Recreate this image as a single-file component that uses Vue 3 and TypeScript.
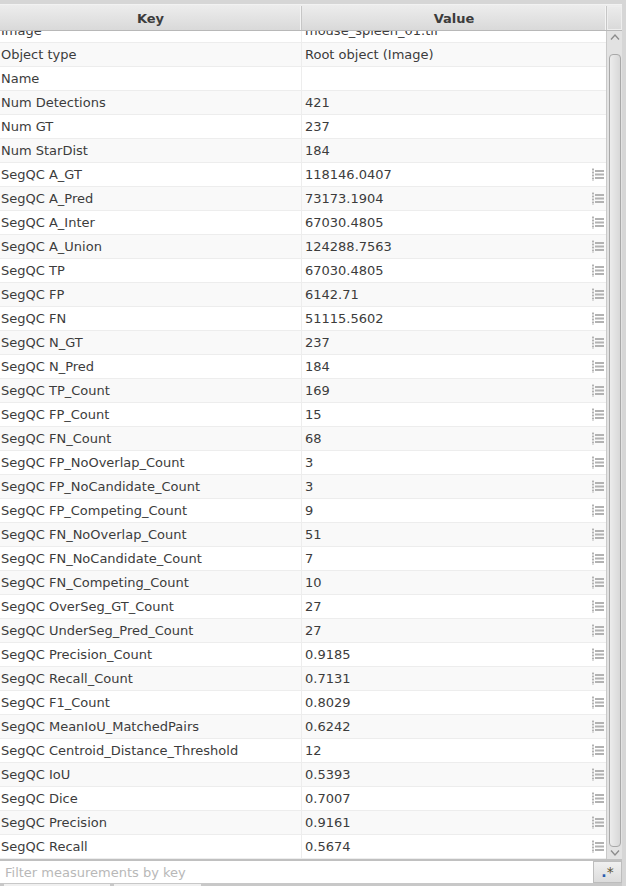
<script setup lang="ts">
interface Row {
  key: string;
  value: string;
  plot?: boolean;
}

const meta: Row[] = [
  { key: 'Image', value: 'mouse_spleen_01.tif' },
  { key: 'Object type', value: 'Root object (Image)' },
  { key: 'Name', value: '' },
  { key: 'Num Detections', value: '421' },
  { key: 'Num GT', value: '237' },
  { key: 'Num StarDist', value: '184' },
];

const measurements: [string, string][] = [
  ['A_GT', '118146.0407'],
  ['A_Pred', '73173.1904'],
  ['A_Inter', '67030.4805'],
  ['A_Union', '124288.7563'],
  ['TP', '67030.4805'],
  ['FP', '6142.71'],
  ['FN', '51115.5602'],
  ['N_GT', '237'],
  ['N_Pred', '184'],
  ['TP_Count', '169'],
  ['FP_Count', '15'],
  ['FN_Count', '68'],
  ['FP_NoOverlap_Count', '3'],
  ['FP_NoCandidate_Count', '3'],
  ['FP_Competing_Count', '9'],
  ['FN_NoOverlap_Count', '51'],
  ['FN_NoCandidate_Count', '7'],
  ['FN_Competing_Count', '10'],
  ['OverSeg_GT_Count', '27'],
  ['UnderSeg_Pred_Count', '27'],
  ['Precision_Count', '0.9185'],
  ['Recall_Count', '0.7131'],
  ['F1_Count', '0.8029'],
  ['MeanIoU_MatchedPairs', '0.6242'],
  ['Centroid_Distance_Threshold', '12'],
  ['IoU', '0.5393'],
  ['Dice', '0.7007'],
  ['Precision', '0.9161'],
  ['Recall', '0.5674'],
];

const rows: Row[] = [
  ...meta,
  ...measurements.map(([k, value]) => ({ key: `SegQC ${k}`, value, plot: true })),
];
</script>

<template>
  <div class="pane">
    <div class="head">
      <div class="head-cell key">Key</div>
      <div class="head-cell val">Value</div>
      <div class="head-fill"></div>
    </div>

    <div class="middle">
      <div class="rows">
        <div v-for="(r, i) in rows" :key="r.key" class="row" :class="{ odd: i % 2 === 1 }">
          <div class="cell key">{{ r.key }}</div>
          <div class="cell val">
            <span>{{ r.value }}</span>
            <svg v-if="r.plot" class="plot" width="12" height="13" viewBox="0 0 12 13">
              <rect x="0" y="0" width="2" height="13" fill="#dadada" />
              <g fill="#b2b2b2">
                <rect x="0" y="1" width="2" height="1" />
                <rect x="0" y="4" width="2" height="1" />
                <rect x="0" y="7" width="2" height="1" />
                <rect x="0" y="10" width="2" height="1" />
                <rect x="3" y="2" width="9" height="2" />
                <rect x="3" y="5.5" width="9" height="2" />
                <rect x="3" y="9" width="9" height="2" />
              </g>
            </svg>
          </div>
        </div>
      </div>

      <div class="scrollbar">
        <svg class="arrow" width="10" height="6" viewBox="0 0 10 6">
          <path d="M1 5.5 L5 1 L9 5.5" fill="none" stroke="#8c8c8c" stroke-width="1.3" />
        </svg>
        <div class="thumb"></div>
        <svg class="arrow" width="10" height="6" viewBox="0 0 10 6">
          <path d="M1 .5 L5 5 L9 .5" fill="none" stroke="#8c8c8c" stroke-width="1.3" />
        </svg>
      </div>
    </div>

    <div class="filter">
      <div class="input">Filter measurements by key</div>
      <div class="regex"><span class="dot">.</span><span class="star">*</span></div>
    </div>

    <div class="tabs">
      <div class="tab first"></div>
      <div class="tab second"></div>
    </div>
  </div>
</template>

<style>
html,
body {
  margin: 0;
  background: #ececec;
}
</style>

<style scoped>
.pane {
  width: 626px;
  height: 886px;
  display: flex;
  flex-direction: column;
  overflow: hidden;
  box-sizing: border-box;
  padding: 4px 4px 0 0;
  background: #d6d6d6;
  font-family: "DejaVu Sans", sans-serif;
  font-size: 13px;
  color: #3c3c3c;
}
.head {
  flex: none;
  height: 27px;
  box-sizing: border-box;
  display: flex;
  padding-top: 1px;
  border-top: 1px solid #f2f2f2;
  border-bottom: 1px solid #b8b8b8;
  background: linear-gradient(#ededed, #d9d9d9);
}
.head-cell {
  display: flex;
  align-items: center;
  justify-content: center;
  box-sizing: border-box;
  font-weight: 700;
  border-right: 1px solid #c6c6c6;
  box-shadow: inset -1px 0 0 #f4f4f4;
}
.head-cell.key {
  width: 302px;
}
.head-cell.val {
  width: 305px;
}
.head-fill {
  flex: 1;
  box-shadow: inset 0 0 0 1px #eeeeee;
}
.middle {
  flex: none;
  height: 828px;
  display: flex;
}
.rows {
  flex: none;
  width: 606px;
  height: 828px;
  overflow: hidden;
  display: flex;
  flex-direction: column;
  justify-content: flex-end;
  background: #fff;
}
.row {
  flex: none;
  height: 24px;
  box-sizing: border-box;
  display: flex;
  background: #fff;
  border-bottom: 1px solid #ededed;
}
.row.odd {
  background: #f9f9f9;
}
.cell {
  display: flex;
  align-items: center;
  box-sizing: border-box;
  white-space: nowrap;
}
.cell.key {
  width: 302px;
  padding-left: 1px;
  border-right: 1px solid #ededed;
}
.cell.val {
  flex: 1;
  justify-content: space-between;
  padding: 0 2px 0 3px;
}
.plot {
  flex: none;
}
.scrollbar {
  flex: 1;
  display: flex;
  flex-direction: column;
  align-items: center;
  box-sizing: border-box;
  padding: 3px 0 3px;
  background: #e2e2e2;
  border-left: 1px solid #c9c9c9;
}
.arrow {
  flex: none;
}
.thumb {
  flex: 1;
  width: 10px;
  margin: 14px 0 3px;
  border: 1px solid #a8a8a8;
  border-radius: 4px;
  background: linear-gradient(90deg, #ececec, #d8d8d8);
}
.filter {
  flex: none;
  height: 24px;
  display: flex;
  box-sizing: border-box;
  border-top: 2px solid #c0c0c0;
}
.input {
  flex: 1;
  display: flex;
  align-items: center;
  padding-left: 5px;
  background: #fff;
  color: #b8b8b8;
  font-size: 13px;
}
.regex {
  flex: none;
  width: 29px;
  display: flex;
  align-items: center;
  justify-content: center;
  box-sizing: border-box;
  border: 1px solid #bdbdbd;
  background: linear-gradient(#f0f0f0, #dcdcdc);
  font-size: 14px;
}
.dot {
  color: #2a5db0;
  font-weight: 700;
}
.star {
  color: #5c5030;
}
.tabs {
  flex: none;
  height: 3px;
  display: flex;
  gap: 4px;
  box-sizing: border-box;
  padding: 1px 0 0 4px;
  background: #c8c8c8;
}
.tab {
  background: #f0f0f0;
}
.tab.first {
  width: 106px;
}
.tab.second {
  width: 87px;
}
</style>
